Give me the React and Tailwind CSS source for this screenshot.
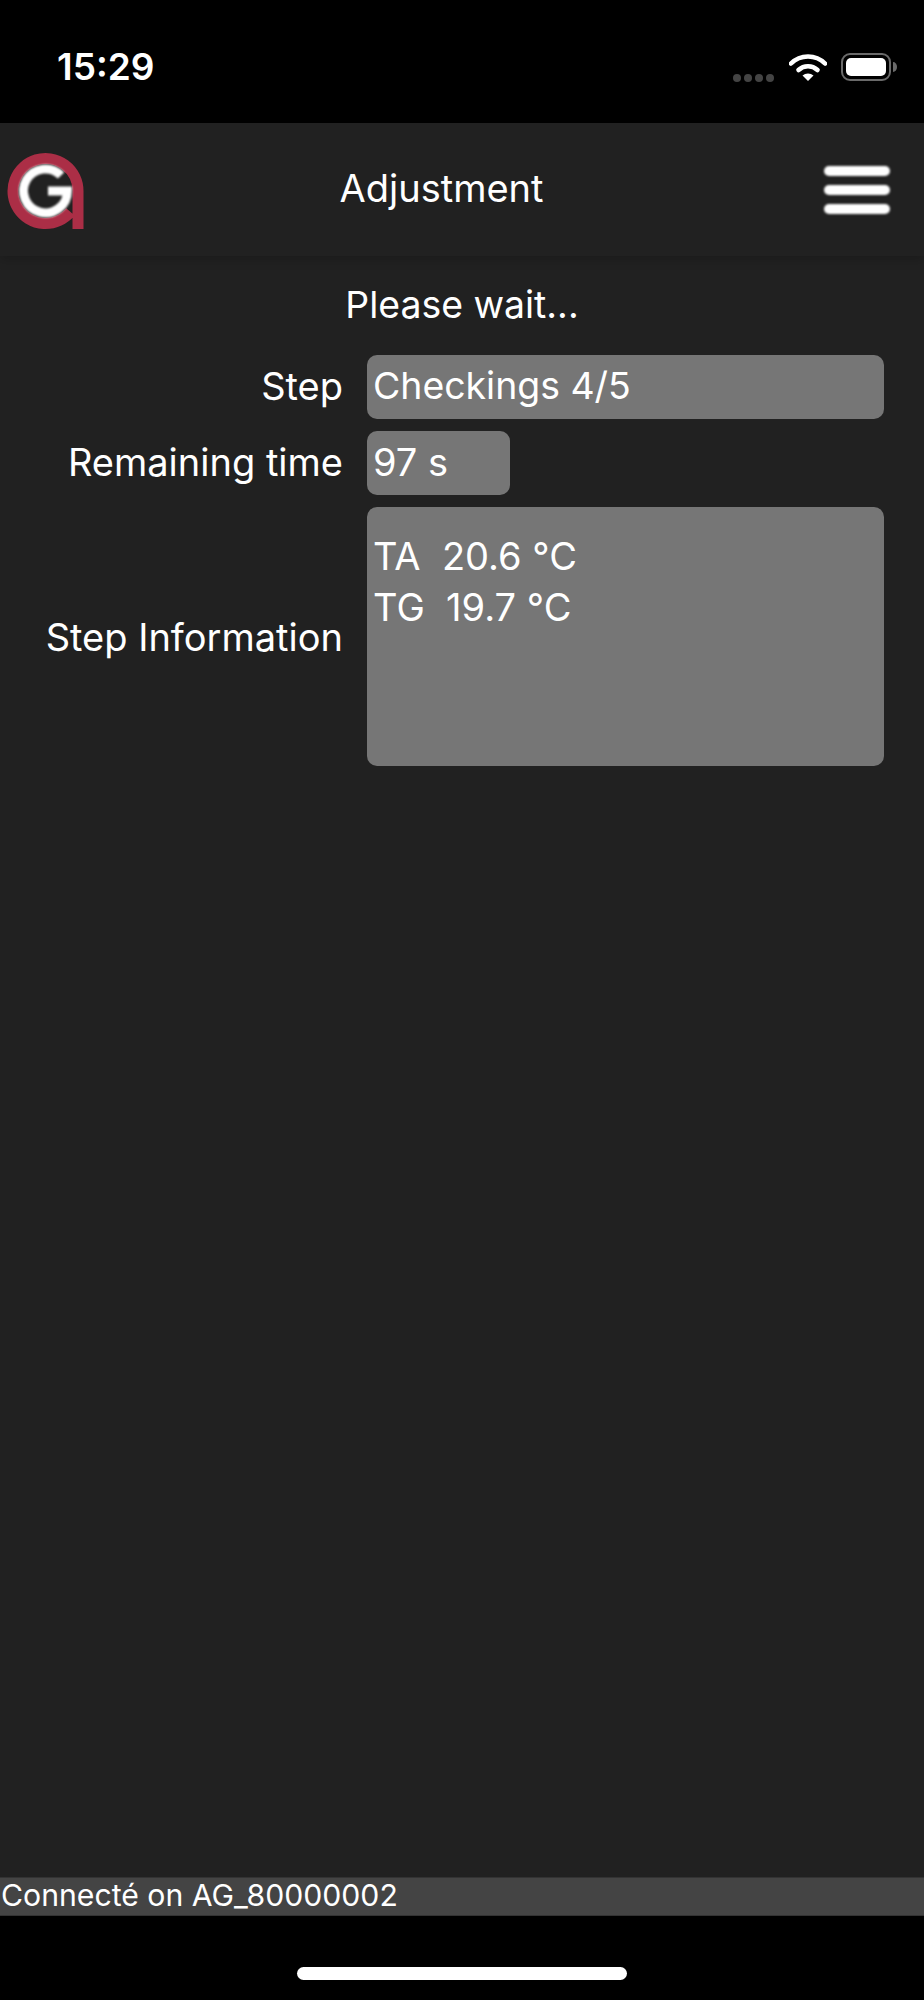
export default function App() {
  const font = "font-['Inter','Liberation_Sans',sans-serif]";
  return (
    <div className={`w-[924px] h-[2000px] bg-black flex flex-col overflow-hidden ${font}`}>
      {/* Status bar */}
      <div className="h-[123px] shrink-0 flex items-start justify-between">
        <div className="ml-[57px] mt-[46px] text-[37px] leading-[42px] font-semibold text-white">15:29</div>
        <div className="flex items-start mt-[53px] mr-[27px]">
          <div className="flex gap-[3px] mt-[21px] mr-[15px]">
            <span className="w-[8px] h-[8px] rounded-full bg-[#444]" />
            <span className="w-[8px] h-[8px] rounded-full bg-[#444]" />
            <span className="w-[8px] h-[8px] rounded-full bg-[#444]" />
            <span className="w-[8px] h-[8px] rounded-full bg-[#444]" />
          </div>
          <svg width="38" height="28" viewBox="0 0 38 28" className="mr-[14px]">
            <path d="M2 10.5a24 24 0 0 1 34 0" fill="none" stroke="#fff" strokeWidth="4.6" strokeLinecap="round" />
            <path d="M9.5 17a14 14 0 0 1 19 0" fill="none" stroke="#fff" strokeWidth="4.6" strokeLinecap="round" />
            <path d="M13.5 22.5a8.4 8.4 0 0 1 11 0L19 28z" fill="#fff" />
          </svg>
          <div className="flex items-center">
            <div className="w-[50px] h-[28px] rounded-[9px] border-[2.5px] border-[#6a6a6a] p-[3px]">
              <div className="w-full h-full rounded-[5px] bg-white" />
            </div>
            <svg width="4" height="10" viewBox="0 0 4 10" className="ml-[2px]">
              <path d="M0 0a4 5 0 0 1 0 10z" fill="#6a6a6a" />
            </svg>
          </div>
        </div>
      </div>

      {/* Header */}
      <div className="relative z-10 h-[133px] shrink-0 bg-[#212121] flex items-center justify-between shadow-[0_4px_10px_rgba(0,0,0,0.18)]">
        <svg width="80" height="80" viewBox="0 0 80 80" className="ml-[7px] mt-[1px]">
          <path d="M71 79V41a32.5 32.5 0 1 0-7.6 20.9" fill="none" stroke="#ab2e46" strokeWidth="11" />
          <path d="M54.1 25.4A22 22 0 1 0 60.5 41H41" fill="none" stroke="#fff" strokeWidth="9" style={{ filter: "blur(0.8px)" }} />
        </svg>
        <div className="text-[38px] leading-[42px] text-white mb-[3px] ml-[-28px]">Adjustment</div>
        <div className="flex flex-col gap-[9px] mr-[34px] blur-[1px]">
          <span className="w-[66px] h-[10px] rounded-full bg-white" />
          <span className="w-[66px] h-[10px] rounded-full bg-white" />
          <span className="w-[66px] h-[10px] rounded-full bg-white" />
        </div>
      </div>

      {/* Body */}
      <div className="flex-1 bg-[#212121] flex flex-col">
        <div className="text-[37.4px] leading-[42px] text-white text-center mt-[28px] h-[42px]">Please wait...</div>
        <div className="text-[38px] leading-[42px] text-white mt-[29px] ml-[25px] mr-[40px] grid grid-cols-[318px_517px] gap-x-[24px] gap-y-[12px]">
          <div className="flex items-center justify-end pb-[2px]">Step</div>
          <div className="h-[64px] rounded-[10px] bg-[#767676] px-[6px] pb-[2px] flex items-center text-[37.4px]">Checkings 4/5</div>
          <div className="flex items-center justify-end pb-[2px]">Remaining time</div>
          <div className="w-[143px] h-[64px] rounded-[10px] bg-[#767676] px-[6px] pb-[2px] flex items-center">97 s</div>
          <div className="flex items-center justify-end">Step Information</div>
          <div className="h-[259px] rounded-[10px] bg-[#767676] px-[6px] pt-[24px]">
            <div className="whitespace-pre leading-[51px]">TA  20.6 °C</div>
            <div className="whitespace-pre leading-[51px]">TG  19.7 °C</div>
          </div>
        </div>
      </div>

      {/* Footer status */}
      <div className="h-[39px] shrink-0 bg-[#444444] border-t border-b border-[#333] flex items-center px-[1px] pb-[2px] text-[30.2px] text-white whitespace-nowrap">
        Connecté on AG_80000002
      </div>

      {/* Home indicator */}
      <div className="h-[84px] shrink-0 flex justify-center pt-[51px]">
        <div className="w-[330px] h-[13px] rounded-full bg-white" />
      </div>
    </div>
  );
}
